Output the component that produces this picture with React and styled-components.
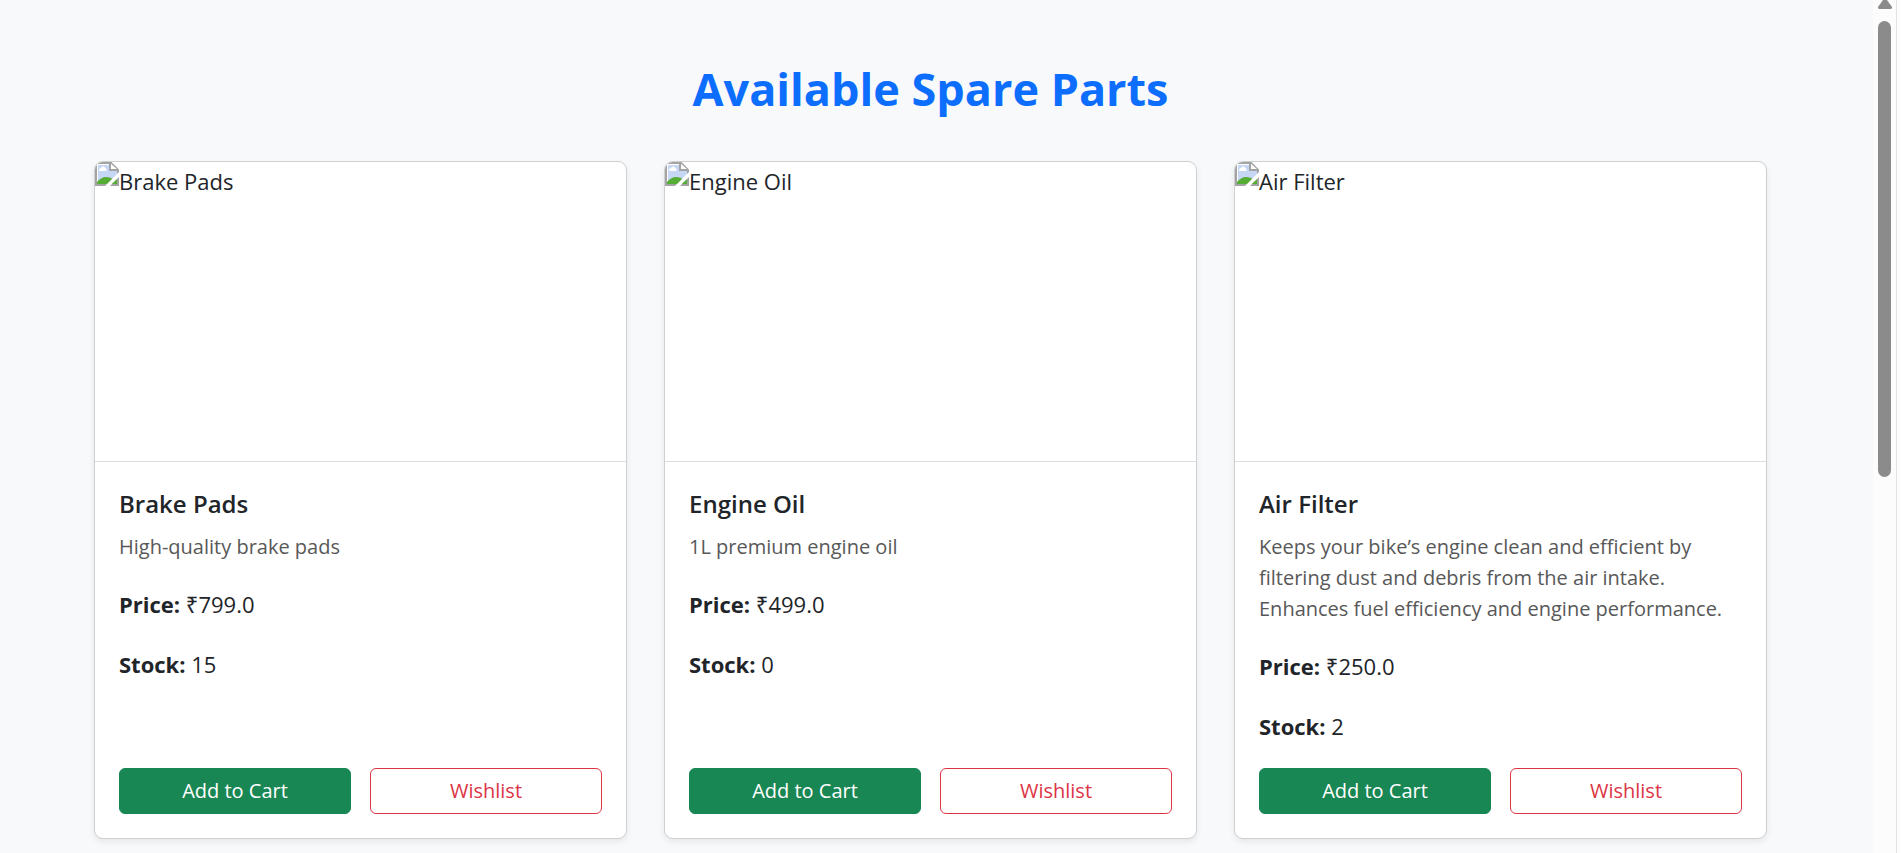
import React from "react";
import styled, { createGlobalStyle } from "styled-components";

const GlobalStyle = createGlobalStyle`
  *, *::before, *::after { box-sizing: border-box; }
  body {
    margin: 0;
    background: #f8f9fa;
    color: #212529;
    font-family: "Segoe UI", "Open Sans", "Noto Sans", sans-serif;
    font-size: 22px;
    line-height: 36px;
  }
`;

const Page = styled.div`
  display: flex;
  height: 100vh;
  overflow: hidden;
  background: #f8f9fb;
`;

const Content = styled.main`
  flex: 1;
  min-width: 0;
  padding: 60px 106px 36px 94px;
`;

const Heading = styled.h2`
  margin: 0 0 43px;
  color: #0d6efd;
  font-size: 45px;
  line-height: 58px;
  font-weight: 700;
  text-align: center;
`;

const Grid = styled.div`
  display: grid;
  grid-template-columns: repeat(3, minmax(0, 1fr));
  gap: 37px;
`;

const Card = styled.article`
  display: flex;
  flex-direction: column;
  overflow: hidden;
  background: #fff;
  border: 1px solid #cfd0d2;
  border-radius: 9px;
  box-shadow: 0 3px 6px rgba(0, 0, 0, 0.075);
`;

const Picture = styled.div`
  display: flex;
  align-items: flex-start;
  height: 300px;
  border-bottom: 1px solid #dcddde;
`;

const PictureAlt = styled.span`
  line-height: 38px;
`;

const CardBody = styled.div`
  display: flex;
  flex: 1;
  flex-direction: column;
  padding: 24px;
`;

const CardTitle = styled.h5`
  margin: 0 0 9px;
  font-size: 24px;
  line-height: 36px;
  font-weight: 600;
`;

const Description = styled.p`
  margin: 0 0 24px;
  color: #585858;
  font-size: 20px;
  line-height: 31px;
`;

const Detail = styled.p`
  margin: 0 0 24px;
`;

const Actions = styled.div`
  display: grid;
  grid-template-columns: 1fr 1fr;
  gap: 19px;
  margin-top: auto;
`;

const Button = styled.button`
  height: 46px;
  padding: 0 12px;
  border: 1px solid ${(p) => (p.$outline ? "#dc3545" : "#198754")};
  border-radius: 6px;
  background: ${(p) => (p.$outline ? "#fff" : "#198754")};
  color: ${(p) => (p.$outline ? "#dc3545" : "#fff")};
  font: inherit;
  font-size: 20px;
  line-height: 30px;
  cursor: pointer;
`;

const ScrollTrack = styled.div`
  display: flex;
  flex-direction: column;
  align-items: center;
  flex: 0 0 24px;
  background: #fcfcfc;
  border-right: 1px solid #e3e3e3;
`;

const ScrollArrow = styled.svg`
  display: block;
  flex: none;
  margin-bottom: 12px;
`;

const ScrollThumb = styled.div`
  width: 13px;
  flex: 0 0 456px;
  border-radius: 7px;
  background: #8b8b8b;
`;

const WindowEdge = styled.div`
  flex: 0 0 4px;
  background: #fcfcfc;
`;

const MissingImage = () => (
  <svg width="24" height="24" viewBox="0 0 24 24" aria-hidden="true">
    <path d="M1 1H16L23 8V23H1Z" fill="#fff" stroke="#a3a3a3" strokeWidth="2" />
    <path d="M3 3H15V9H22V22H3Z" fill="#c6d7f6" />
    <path d="M4 9C4 7 5 6 6 6C7 4 10 4 10 6C12 6 12 9 11 9Z" fill="#fff" />
    <path d="M2 22V20C4 17 8 15 11 15C14 15 17 16 19 18V22Z" fill="#56ad35" />
    <path d="M10 24L24 10V15L15 24Z" fill="#fff" />
    <path d="M17 22L22 17V22Z" fill="#56ad35" />
    <path d="M15 1V8H23" fill="#fff" stroke="#a3a3a3" strokeWidth="2" />
  </svg>
);

const parts = [
  { name: "Brake Pads", description: "High-quality brake pads", price: "799.0", stock: 15 },
  { name: "Engine Oil", description: "1L premium engine oil", price: "499.0", stock: 0 },
  {
    name: "Air Filter",
    description:
      "Keeps your bike’s engine clean and efficient by filtering dust and debris from the air intake. Enhances fuel efficiency and engine performance.",
    price: "250.0",
    stock: 2,
  },
];

const PartCard = ({ part }) => (
  <Card>
    <Picture>
      <MissingImage />
      <PictureAlt>{part.name}</PictureAlt>
    </Picture>
    <CardBody>
      <CardTitle>{part.name}</CardTitle>
      <Description>{part.description}</Description>
      <Detail>
        <strong>Price:</strong> ₹{part.price}
      </Detail>
      <Detail>
        <strong>Stock:</strong> {part.stock}
      </Detail>
      <Actions>
        <Button type="button">Add to Cart</Button>
        <Button type="button" $outline>Wishlist</Button>
      </Actions>
    </CardBody>
  </Card>
);

export default function App() {
  return (
    <>
      <GlobalStyle />
      <Page>
        <Content>
          <Heading>Available Spare Parts</Heading>
          <Grid>
            {parts.map((part) => (
              <PartCard key={part.name} part={part} />
            ))}
          </Grid>
        </Content>
        <ScrollTrack aria-hidden="true">
          <ScrollArrow width="16" height="9" viewBox="0 0 16 9">
            <path d="M6 0H10L15 7Q15 9 14 9H2Q1 9 1 7Z" fill="#8b8b8b" />
          </ScrollArrow>
          <ScrollThumb />
        </ScrollTrack>
        <WindowEdge />
      </Page>
    </>
  );
}
